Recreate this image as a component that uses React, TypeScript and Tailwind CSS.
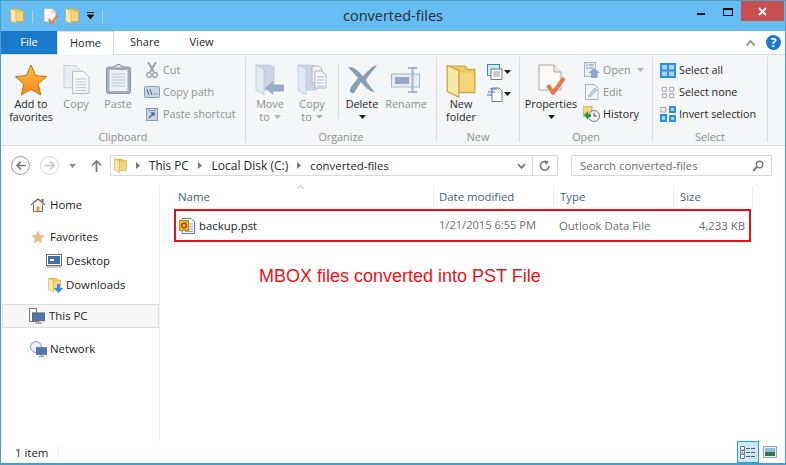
import React from 'react';

type IconProps = { className?: string };

const Folder: React.FC<IconProps> = ({ className }) => (
  <svg viewBox="0 0 14 16" className={className}>
    <path d="M1 1 L9 1 L10 2.5 L13.5 2.5 L13.5 13.5 L6 13.5 Z" fill="#eec75f" stroke="#c9a64a" strokeWidth="0.6" />
    <path d="M0.5 0.7 L6 3 L6 15.6 L0.5 13 Z" fill="#f9e8a8" stroke="#c9a64a" strokeWidth="0.6" />
    <path d="M6.5 4 H13 V13 H6.5 Z" fill="#f3d778" />
  </svg>
);

const Check: React.FC<IconProps> = ({ className }) => (
  <svg viewBox="0 0 28 32" className={className}>
    <path d="M2 1 H17 L24 8 V26 H2 Z" fill="#fbfaf6" stroke="#a9a9a4" />
    <path d="M17 1 V8 H24" fill="#e9e8e2" stroke="#a9a9a4" />
    <path d="M11 21 L16 29 L27 14" fill="none" stroke="#e8784a" strokeWidth="4" strokeLinejoin="round" />
  </svg>
);

const Star: React.FC<IconProps> = ({ className }) => (
  <svg viewBox="0 0 32 32" className={className}>
    <defs>
      <linearGradient id="star" x1="0" y1="0" x2="0" y2="1">
        <stop offset="0" stopColor="#ffc34a" />
        <stop offset="1" stopColor="#f58a14" />
      </linearGradient>
    </defs>
    <path d="M16 1 L20.6 11.6 L31.5 12.6 L23.2 20 L25.8 31 L16 25.2 L6.2 31 L8.8 20 L0.5 12.6 L11.4 11.6 Z" fill="url(#star)" stroke="#c46d16" strokeWidth="1" />
  </svg>
);

const Pages: React.FC<IconProps> = ({ className }) => (
  <svg viewBox="0 0 28 30" className={className}>
    <path d="M1 1 H13 L18 6 V24 H1 Z" fill="#e9eef6" stroke="#c6d0e0" />
    <path d="M10 7 H21 L27 13 V30 H10 Z" fill="#f8fafd" stroke="#aab6c8" />
    <path d="M13 15 H24 M13 18 H24 M13 21 H24 M13 24 H24 M13 27 H24" stroke="#b7c2d2" />
  </svg>
);

const Clipboard: React.FC<IconProps> = ({ className }) => (
  <svg viewBox="0 0 25 30" className={className}>
    <rect x="0.5" y="3" width="24" height="26.5" rx="2" fill="#a3adbe" stroke="#8c97a9" />
    <rect x="3.5" y="6" width="18" height="21" fill="#eef1f5" />
    <path d="M6 10 H19 M6 13 H19 M6 16 H19 M6 19 H19 M6 22 H19" stroke="#b9c1cd" />
    <path d="M8 4 V2 H11 V0.5 H14 V2 H17 V4 Z" fill="#eef1f5" stroke="#8c97a9" />
  </svg>
);

const MoveFolder: React.FC<IconProps & { copy?: boolean }> = ({ className, copy }) => (
  <svg viewBox="0 0 30 32" className={className}>
    <path d="M1 1 L15 1 L19 3 L19 26 L7 26 Z" fill="#cbd5e4" stroke="#b7c2d2" strokeWidth="0.7" />
    <path d="M1 1 L9 5 L9 31 L1 26 Z" fill="#e3e9f2" stroke="#b7c2d2" strokeWidth="0.7" />
    {copy ? (
      <>
        <path d="M15 2 H22 L25 5 V19 H15 Z" fill="#eef2f7" stroke="#aab6c8" />
        <path d="M18 7 H25 L29 11 V24 H18 Z" fill="#f8fafd" stroke="#aab6c8" />
        <path d="M20 13 H27 M20 16 H27 M20 19 H27 M20 22 H27" stroke="#aab6c8" />
      </>
    ) : (
      <path d="M10 24 L18 17 V20.5 H29 V27.5 H18 V31 Z" fill="#9dacc2" />
    )}
  </svg>
);

const Cross: React.FC<IconProps> = ({ className }) => (
  <svg viewBox="0 0 30 30" className={className}>
    <path d="M1 3 C8 2 13 9 16 12 C20 8 25 2 30 1 C26 7 21 12 19 16 C21 21 25 24 28 29 C22 27 17 22 14 18 C11 22 9 26 7 29 C3 30 2 26 4 23 C6 20 9 17 11 14 C8 10 4 7 1 3 Z" fill="#8b9cb6" />
  </svg>
);

const RenameIcon: React.FC<IconProps> = ({ className }) => (
  <svg viewBox="0 0 30 26" className={className}>
    <rect x="0.5" y="7" width="28" height="13" fill="#e8edf4" stroke="#aab7c9" />
    <rect x="4" y="10" width="14" height="7" fill="#98a9c2" />
    <path d="M17 1 H26 M17 25 H26 M21.5 1 V25" stroke="#a8b5c8" strokeWidth="2" fill="none" />
  </svg>
);

const Caret: React.FC<{ dark?: boolean }> = ({ dark }) => (
  <svg viewBox="0 0 7 4" className="inline-block h-[4px] w-[7px]">
    <path d="M0 0 H7 L3.5 4 Z" fill={dark ? '#1c1c1c' : '#b5b5b5'} />
  </svg>
);

// big button in the ribbon: icon on top, one or two lines under it
const BigTool: React.FC<{
  width: string;
  icon: React.ReactNode;
  lines: React.ReactNode[];
  disabled?: boolean;
}> = ({ width, icon, lines, disabled }) => (
  <div className={`flex flex-col items-center ${width} ${disabled ? 'text-[#8f8f8f]' : 'text-[#262626]'}`}>
    <div className="flex h-[40px] items-start justify-center pt-[7px]">{icon}</div>
    <div className="flex h-[13px] items-center justify-center whitespace-nowrap leading-[13px]">{lines[0]}</div>
    {lines[1] && <div className="flex h-[13px] items-center justify-center gap-1 whitespace-nowrap leading-[13px]">{lines[1]}</div>}
  </div>
);

const SmallTool: React.FC<{ icon: React.ReactNode; label: React.ReactNode; disabled?: boolean }> = ({ icon, label, disabled }) => (
  <div className={`flex h-[22px] items-center whitespace-nowrap ${disabled ? 'text-[#8f8f8f]' : 'text-[#262626]'}`}>
    <div className="flex w-[19px] justify-center">{icon}</div>
    <span className="ml-[2px] flex items-center gap-[6px]">{label}</span>
  </div>
);

const Group: React.FC<{ width: string; label: string; children: React.ReactNode }> = ({ width, label, children }) => (
  <div className={`flex h-full shrink-0 flex-col border-r border-[#dcdddf] ${width}`}>
    <div className="flex h-[73px] shrink-0">{children}</div>
    <div className="text-center leading-[13px] text-[#8f8f8f]">{label}</div>
  </div>
);

const Crumb = () => (
  <svg viewBox="0 0 4 7" className="mx-[9px] h-[7px] w-[4px] shrink-0">
    <path d="M0 0 L4 3.5 L0 7 Z" fill="#777" />
  </svg>
);

const NavRow: React.FC<{ icon: React.ReactNode; label: string; indent?: boolean; selected?: boolean; className?: string }> = ({
  icon,
  label,
  indent,
  selected,
  className,
}) => (
  <div
    className={`flex h-[24px] items-center text-[#1c1c1c] ${indent ? 'pl-[43px]' : selected ? 'pl-[24px]' : 'pl-[27px]'} ${
      selected ? 'border border-[#dedede] bg-[#f6f6f6]' : ''
    } ${className ?? ''}`}
  >
    <div className="flex w-[20px] justify-center">{icon}</div>
    <span className="ml-[2px]">{label}</span>
  </div>
);

const Monitor: React.FC<IconProps> = ({ className }) => (
  <svg viewBox="0 0 14 12" className={className}>
    <rect x="0.5" y="0.5" width="13" height="8.5" fill="#4a7ab5" stroke="#666" />
    <path d="M7 9 V11 M3.5 11.5 H10.5" stroke="#666" />
  </svg>
);

export default function App() {
  return (
    <div className="flex h-[465px] w-[786px] flex-col overflow-hidden border-x border-b-2 border-t border-[#4f9bc7] bg-white font-['Open_Sans',sans-serif] text-[10.8px]">
      {/* title bar */}
      <div className="flex h-[30px] shrink-0 items-center bg-[#67bdf1]">
        <Folder className="ml-[9px] h-[16px] w-[14px]" />
        <div className="ml-[8px] h-[13px] w-px bg-[#a6d5f2]" />
        <Check className="ml-[10px] h-[17px] w-[15px]" />
        <Folder className="ml-[7px] h-[16px] w-[14px]" />
        <svg viewBox="0 0 7 8" className="ml-[8px] h-[8px] w-[7px]">
          <path d="M0 0.5 H7 M0.5 3 H6.5 L3.5 7 Z" stroke="#111" strokeWidth="1" fill="#111" />
        </svg>
        <div className="ml-[8px] h-[13px] w-px bg-[#a6d5f2]" />
        <div className="flex-1 pb-[1px] pr-[5px] text-center text-[14.5px] text-[#24303b]">converted-files</div>
        <div className="flex h-full w-[26px] items-start justify-center pt-[12px]">
          <div className="h-[2px] w-[8px] bg-[#111]" />
        </div>
        <div className="flex h-full w-[27px] items-start justify-center pt-[7px]">
          <div className="h-[8px] w-[10px] border border-t-2 border-[#111]" />
        </div>
        <div className="mr-px flex h-[20px] w-[43px] items-center justify-center self-start bg-[#c75050]">
          <svg viewBox="0 0 9 9" className="h-[9px] w-[9px]">
            <path d="M1 1 L8 8 M8 1 L1 8" stroke="#fff" strokeWidth="1.9" />
          </svg>
        </div>
      </div>

      {/* tabs */}
      <div className="flex h-[24px] shrink-0 border-b border-[#dadbdc] text-[11px] text-[#262626]">
        <div className="flex h-[23px] w-[56px] items-center justify-center bg-[#1979ca] text-white">File</div>
        <div className="z-10 flex h-[24px] w-[57px] items-center justify-center border-x border-t border-[#dadbdc] bg-white">Home</div>
        <div className="ml-[16px] flex h-[23px] items-center">Share</div>
        <div className="ml-[30px] flex h-[23px] items-center">View</div>
        <div className="ml-auto flex h-[23px] items-center pr-[4px]">
          <svg viewBox="0 0 9 6" className="mr-[11px] h-[6px] w-[9px]">
            <path d="M0.5 5.5 L4.5 1 L8.5 5.5" fill="none" stroke="#8a8a8a" strokeWidth="1.8" />
          </svg>
          <div className="flex h-[15px] w-[15px] items-center justify-center rounded-full bg-[#1f78c8] text-[12px] font-bold text-white">?</div>
        </div>
      </div>

      {/* ribbon */}
      <div className="flex h-[91px] shrink-0 border-b border-[#dadbdc] bg-[#f5f6f7] pb-[3px] pt-[2px]">
        <Group width="w-[245px]" label="Clipboard">
          <BigTool width="w-[56px] ml-[2px]" icon={<Star className="h-[32px] w-[32px]" />} lines={['Add to', 'favorites']} />
          <BigTool width="w-[34px]" disabled icon={<Pages className="h-[30px] w-[27px]" />} lines={['Copy']} />
          <BigTool width="w-[38px] ml-[6px]" disabled icon={<Clipboard className="h-[30px] w-[25px]" />} lines={['Paste']} />
          <div className="ml-[5px] flex flex-col pt-[2px]">
            <SmallTool
              disabled
              label="Cut"
              icon={
                <svg viewBox="0 0 12 16" className="h-[16px] w-[12px]">
                  <path d="M2 0 L8 10 M10 0 L4 10" stroke="#8797b0" strokeWidth="1.6" />
                  <circle cx="3" cy="13" r="2.3" fill="none" stroke="#8797b0" strokeWidth="1.2" />
                  <circle cx="9" cy="13" r="2.3" fill="none" stroke="#8797b0" strokeWidth="1.2" />
                </svg>
              }
            />
            <SmallTool
              disabled
              label="Copy path"
              icon={
                <svg viewBox="0 0 16 12" className="h-[12px] w-[16px]">
                  <rect x="0.5" y="0.5" width="15" height="11" rx="1" fill="#c8d3e4" stroke="#8a9ab3" />
                  <path d="M3 3 L5 9 M6 3 L8 9 M10 8 H11 M12.5 8 H13.5" stroke="#5a6b85" />
                </svg>
              }
            />
            <SmallTool
              disabled
              label="Paste shortcut"
              icon={
                <svg viewBox="0 0 12 14" className="h-[14px] w-[12px]">
                  <rect x="0.5" y="1.5" width="11" height="12" fill="#c8d3e4" stroke="#8a9ab3" />
                  <path d="M3 1.5 H9 V3.5 H3 Z" fill="#eef1f5" stroke="#8a9ab3" />
                  <path d="M3 11 L8 6 M5 6 H8 V9" stroke="#4f6a92" strokeWidth="1.4" fill="none" />
                </svg>
              }
            />
          </div>
        </Group>
        <Group width="w-[191px]" label="Organize">
          <BigTool
            width="w-[42px] ml-[3px]"
            disabled
            icon={<MoveFolder className="h-[32px] w-[30px]" />}
            lines={['Move', <>to <Caret /></>]}
          />
          <BigTool
            width="w-[42px]"
            disabled
            icon={<MoveFolder copy className="h-[32px] w-[30px]" />}
            lines={['Copy', <>to <Caret /></>]}
          />
          <div className="ml-[5px] mt-[7px] h-[54px] w-px bg-[#dcdddf]" />
          <BigTool width="w-[46px]" icon={<Cross className="h-[30px] w-[30px]" />} lines={['Delete', <Caret dark />]} />
          <BigTool width="w-[42px]" disabled icon={<div className="pt-[3px]"><RenameIcon className="h-[26px] w-[30px]" /></div>} lines={['Rename']} />
        </Group>
        <Group width="w-[83px]" label="New">
          <BigTool width="w-[48px]" icon={<Folder className="h-[34px] w-[30px]" />} lines={['New', 'folder']} />
          <div className="ml-[2px] flex flex-col gap-[6px] pt-[7px]">
            <div className="flex items-center gap-[1px]">
              <svg viewBox="0 0 16 16" className="h-[16px] w-[16px]">
                <rect x="0.5" y="0.5" width="12" height="11" fill="#dcebfa" stroke="#2f86d2" />
                <path d="M4 5 H15 V15.5 H4 Z" fill="#fff" stroke="#777" />
                <path d="M6 8 H13 M6 10 H13 M6 12 H13" stroke="#999" />
              </svg>
              <Caret dark />
            </div>
            <div className="flex items-center gap-[1px]">
              <svg viewBox="0 0 16 16" className="h-[16px] w-[16px]">
                <path d="M5 2 H12 L15 5 V15.5 H5 Z" fill="#fff" stroke="#777" />
                <path d="M3 3 H10 M1 6 H8 M0 9 H5" stroke="#2f72c0" strokeWidth="1.2" />
              </svg>
              <Caret dark />
            </div>
          </div>
        </Group>
        <Group width="w-[133px]" label="Open">
          <BigTool width="w-[62px]" icon={<Check className="h-[32px] w-[28px]" />} lines={['Properties', <Caret dark />]} />
          <div className="flex flex-col pt-[2px]">
            <SmallTool
              disabled
              label={<>Open <Caret /></>}
              icon={
                <svg viewBox="0 0 16 16" className="h-[16px] w-[16px]">
                  <rect x="0.5" y="0.5" width="11" height="14" fill="#e8edf4" stroke="#a8b5c8" />
                  <path d="M2 3 H4 M5 3 H10 M2 6 H4 M5 6 H9" stroke="#7f90a8" />
                  <path d="M10 6 L16 11 H13.5 V16 H7 V11 H4.5 Z" fill="#8fa6c7" />
                </svg>
              }
            />
            <SmallTool
              disabled
              label="Edit"
              icon={
                <svg viewBox="0 0 14 16" className="h-[16px] w-[14px]">
                  <path d="M0.5 0.5 H9 L13 4 V15.5 H0.5 Z" fill="#f4f6fa" stroke="#a8b5c8" />
                  <path d="M3 12 L10 4 L12 6 L5 13 Z" fill="#c8d3e4" stroke="#8a9ab3" strokeWidth="0.6" />
                </svg>
              }
            />
            <SmallTool
              label="History"
              icon={
                <svg viewBox="0 0 17 16" className="h-[16px] w-[17px]">
                  <path d="M0 0 H9 V10 H0 Z" fill="#f3d97f" stroke="#c9a64a" />
                  <circle cx="11" cy="10" r="5.5" fill="#eef0f2" stroke="#777" />
                  <path d="M11 7 V10 H14" stroke="#555" fill="none" />
                  <path d="M1 9 L5 5 V8 H8 V11 H5 V14 Z" fill="#2e9c2e" />
                </svg>
              }
            />
          </div>
        </Group>
        <Group width="w-[115px]" label="Select">
          <div className="ml-[5px] flex flex-col pt-[2px]">
            <SmallTool
              label="Select all"
              icon={
                <svg viewBox="0 0 16 15" className="h-[15px] w-[16px]">
                  <rect x="0" y="0" width="16" height="15" fill="#2c8fe0" />
                  <path d="M2 2 H7 V6.5 H2 Z M9 2 H14 V6.5 H9 Z M2 8.5 H7 V13 H2 Z M9 8.5 H14 V13 H9 Z" fill="#a9d3f5" />
                </svg>
              }
            />
            <SmallTool
              label="Select none"
              icon={
                <svg viewBox="0 0 16 15" className="h-[13px] w-[14px]">
                  <path d="M1.5 1.5 H6 V6 H1.5 Z M10 1.5 H14.5 V6 H10 Z M1.5 9 H6 V13.5 H1.5 Z M10 9 H14.5 V13.5 H10 Z" fill="#fff" stroke="#9a9a9a" />
                </svg>
              }
            />
            <SmallTool
              label="Invert selection"
              icon={
                <svg viewBox="0 0 16 16" className="h-[16px] w-[16px]">
                  <path d="M1 1.5 H6 V6 H1 Z M1 9 H6 V14 H1 Z" fill="#fff" stroke="#9a9a9a" />
                  <path d="M9 0 H16 V7 H9 Z M0 8 H7 V16 H0 Z M9 9 H16 V16 H9 Z" fill="#2c8fe0" />
                  <path d="M11 2 H14 V5 H11 Z M2 10 H5 V14 H2 Z M11 11 H14 V14 H11 Z" fill="#a9d3f5" />
                </svg>
              }
            />
          </div>
        </Group>
      </div>

      {/* address row */}
      <div className="flex h-[39px] shrink-0 items-center pl-[10px] pr-[13px] text-[11.4px]">
        <div className="flex h-[19px] w-[19px] items-center justify-center rounded-full border border-[#9b9b9b]">
          <svg viewBox="0 0 10 9" className="h-[9px] w-[10px]">
            <path d="M5 0.5 L1 4.5 L5 8.5 M1 4.5 H10" fill="none" stroke="#7a7a7a" strokeWidth="1.6" />
          </svg>
        </div>
        <div className="ml-[10px] flex h-[19px] w-[19px] items-center justify-center rounded-full border border-[#d6d6d6]">
          <svg viewBox="0 0 10 9" className="h-[9px] w-[10px]">
            <path d="M5 0.5 L9 4.5 L5 8.5 M9 4.5 H0" fill="none" stroke="#c9c9c9" strokeWidth="1.6" />
          </svg>
        </div>
        <svg viewBox="0 0 7 4" className="ml-[10px] h-[4px] w-[7px]">
          <path d="M0 0 H7 L3.5 4 Z" fill="#8d8d8d" />
        </svg>
        <svg viewBox="0 0 11 12" className="ml-[15px] h-[12px] w-[11px]">
          <path d="M5.5 12 V1.5 M1 5.5 L5.5 1 L10 5.5" fill="none" stroke="#7a7a7a" strokeWidth="1.7" />
        </svg>
        <div className="ml-[8px] flex h-[21px] w-[448px] items-center border border-[#d9d9d9] pl-[3px] text-[#262626]">
          <Folder className="h-[15px] w-[13px]" />
          <Crumb />
          <span className="text-[11.7px]">This PC</span>
          <Crumb />
          <span className="ml-px text-[12px]">Local Disk (C:)</span>
          <Crumb />
          <span>converted-files</span>
          <svg viewBox="0 0 9 6" className="ml-auto mr-[6px] h-[6px] w-[9px]">
            <path d="M1 1 L4.5 5 L8 1" fill="none" stroke="#6e6e6e" strokeWidth="1.5" />
          </svg>
          <div className="flex h-full w-[25px] items-center justify-center border-l border-[#d9d9d9]">
            <svg viewBox="0 0 12 12" className="h-[12px] w-[12px]">
              <path d="M10 6 A4.3 4.3 0 1 1 7.5 2" fill="none" stroke="#7a7a7a" strokeWidth="1.6" />
              <path d="M6 0 L10 2 L6.5 5 Z" fill="#7a7a7a" />
            </svg>
          </div>
        </div>
        <div className="ml-[13px] flex h-[21px] flex-1 items-center border border-[#d9d9d9] pl-[8px] pr-[7px] text-[#6d6d6d]">
          <span>Search converted-files</span>
          <svg viewBox="0 0 12 12" className="ml-auto h-[12px] w-[12px]">
            <circle cx="7.5" cy="4.5" r="3.3" fill="none" stroke="#7a7a7a" strokeWidth="1.5" />
            <path d="M5 7 L1 11" stroke="#7a7a7a" strokeWidth="2" />
          </svg>
        </div>
      </div>

      {/* body */}
      <div className="flex min-h-0 flex-1 text-[11.4px]">
        <div className="flex w-[159px] shrink-0 flex-col border-r border-[#f0f0f0] pt-[8px]">
          <NavRow
            label="Home"
            icon={
              <svg viewBox="0 0 16 14" className="h-[14px] w-[16px]">
                <path d="M1 7 L8 1 L15 7" fill="none" stroke="#6e6e6e" strokeWidth="1.4" />
                <path d="M3.5 6.5 V13.5 H12.5 V6.5" fill="#f5efe0" stroke="#6e6e6e" />
                <rect x="6.5" y="8.5" width="3" height="5" fill="#d9a44a" />
                <rect x="11.5" y="1" width="2" height="3" fill="#c8503c" />
              </svg>
            }
          />
          <NavRow
            className="mt-[8px]"
            label="Favorites"
            icon={
              <svg viewBox="0 0 32 32" className="h-[14px] w-[14px]">
                <path d="M16 1 L20.6 11.6 L31.5 12.6 L23.2 20 L25.8 31 L16 25.2 L6.2 31 L8.8 20 L0.5 12.6 L11.4 11.6 Z" fill="#e8bd83" />
              </svg>
            }
          />
          <NavRow
            indent
            label="Desktop"
            icon={
              <svg viewBox="0 0 16 14" className="h-[14px] w-[16px]">
                <rect x="0.5" y="0.5" width="15" height="11" fill="#fff" stroke="#6e6e6e" />
                <rect x="2" y="2" width="12" height="8" fill="#3f6fa8" />
                <path d="M4 5 H8 V7 H4 Z" fill="#fff" />
                <path d="M1 13 H15" stroke="#8a8a8a" />
              </svg>
            }
          />
          <NavRow
            indent
            label="Downloads"
            icon={
              <div className="relative">
                <Folder className="h-[16px] w-[13px]" />
                <svg viewBox="0 0 9 9" className="absolute -right-[2px] bottom-0 h-[9px] w-[9px]">
                  <path d="M3 0 H6 V4 H9 L4.5 9 L0 4 H3 Z" fill="#2c8fe0" />
                </svg>
              </div>
            }
          />
          <NavRow
            selected
            className="ml-[1px] mt-[7px]"
            label="This PC"
            icon={
              <div className="relative h-[16px] w-[16px]">
                <div className="h-[14px] w-[8px] border border-[#777]" />
                <Monitor className="absolute bottom-0 right-0 h-[12px] w-[13px]" />
              </div>
            }
          />
          <NavRow
            className="mt-[9px]"
            label="Network"
            icon={
              <div className="relative h-[16px] w-[16px]">
                <div className="h-[12px] w-[12px] rounded-full border border-[#7d9fcb] bg-[#e8eff8]" />
                <Monitor className="absolute -right-[1px] bottom-0 h-[10px] w-[11px]" />
              </div>
            }
          />
        </div>

        <div className="relative flex min-w-0 flex-1 flex-col pl-[14px] pt-px">
          <svg viewBox="0 0 7 4" className="absolute left-[137px] top-0 h-[4px] w-[7px]">
            <path d="M0.5 4 L3.5 0.5 L6.5 4" fill="none" stroke="#a5b3c4" />
          </svg>
          <div className="flex h-[21px] w-[579px] items-center text-[#4c607a]">
            <div className="h-full w-[259px] pl-[4px] leading-[21px]">Name</div>
            <div className="h-full w-[120px] border-l border-[#e6edf5] pl-[5px] leading-[21px]">Date modified</div>
            <div className="h-full w-[120px] border-l border-[#e6edf5] pl-[6px] leading-[21px]">Type</div>
            <div className="h-full w-[80px] border-x border-[#e6edf5] pl-[6px] leading-[21px]">Size</div>
          </div>
          <div className="mt-[2px] flex h-[33px] w-[577px] items-center border-2 border-[#ee0d14] text-[#6d6d6d]">
            <svg viewBox="0 0 16 16" className="ml-[3px] h-[16px] w-[16px]">
              <path d="M3 0.5 H12 L15.5 4 V15.5 H3 Z" fill="#f4f8fc" stroke="#5a7fb0" />
              <path d="M9 6 H14 M9 8.5 H14 M9 11 H14 M6 13.5 H14" stroke="#8fa9cc" />
              <rect x="0.5" y="2.5" width="9" height="10" fill="#f0b12c" stroke="#c8861a" />
              <circle cx="5" cy="7.5" r="2.3" fill="none" stroke="#8a4d00" strokeWidth="1.3" />
            </svg>
            <span className="ml-[4px] w-[240px] text-[#1c1c1c]">backup.pst</span>
            <span className="w-[120px] text-[11.1px]">1/21/2015 6:55 PM</span>
            <span className="w-[105px]">Outlook Data File</span>
            <span className="w-[81px] text-right">4,233 KB</span>
          </div>
          <div className="ml-[85px] mt-[23px] font-['Liberation_Sans',sans-serif] text-[18px] leading-[22px] text-[#ec1118]">
            MBOX files converted into PST File
          </div>
        </div>
      </div>

      {/* status bar */}
      <div className="flex h-[22px] shrink-0 items-center text-[11.4px] text-[#262626]">
        <span className="ml-[14px] pt-[2px]">1 item</span>
        <div className="ml-[10px] h-[12px] w-px bg-[#f0f0f0]" />
        <div className="ml-auto mr-[8px] flex items-center gap-[4px]">
          <div className="flex h-[22px] w-[22px] items-center justify-center border border-[#26a0da] bg-[#cde8f8]">
            <svg viewBox="0 0 16 13" className="h-[13px] w-[16px]">
              <path d="M0.5 0.5 H4.5 V4 H0.5 Z M0.5 4.5 H4.5 V8 H0.5 Z M0.5 8.5 H4.5 V12.5 H0.5 Z" fill="#fff" stroke="#6c7c8c" />
              <path d="M6 2.5 H15.5 M6 6.5 H15.5 M6 10.5 H15.5" stroke="#4d6278" strokeWidth="1" strokeDasharray="4 1" />
              <circle cx="2.5" cy="6.3" r="0.8" fill="#c8503c" />
            </svg>
          </div>
          <svg viewBox="0 0 14 12" className="h-[12px] w-[14px]">
            <rect x="0.5" y="0.5" width="13" height="11" fill="#eef2f6" stroke="#96a4b3" />
            <rect x="2" y="2" width="10" height="4" fill="#8fbfe0" />
            <rect x="2" y="6" width="10" height="4" fill="#3c6e4a" />
          </svg>
        </div>
      </div>
    </div>
  );
}
